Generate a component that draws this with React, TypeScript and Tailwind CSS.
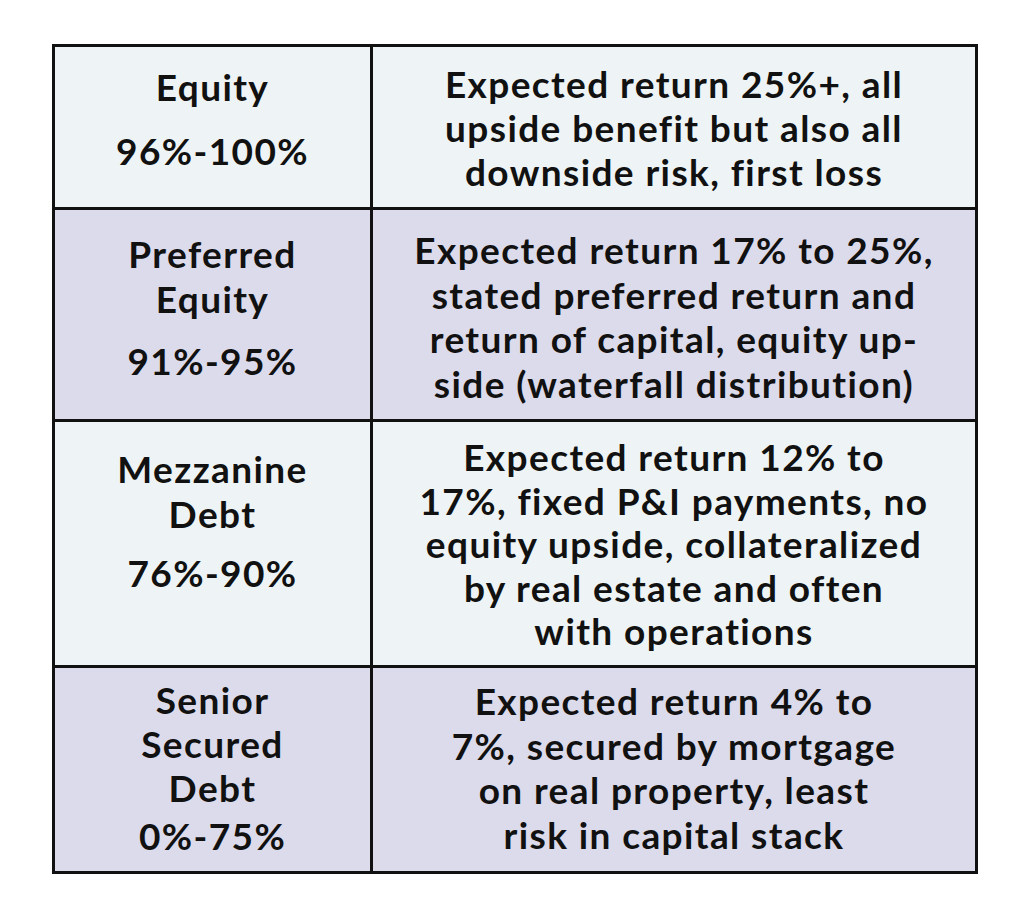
import React from "react";

type Row = {
  name: string[];
  range: string;
  desc: string[];
  bg: string;
  h: string;
  left: string;
  rangeMt: string;
  right: string;
};

const rows: Row[] = [
  {
    name: ["Equity"],
    range: "96%-100%",
    desc: ["Expected return 25%+, all", "upside benefit but also all", "downside risk, first loss"],
    bg: "bg-[#eef4f5]",
    h: "h-[160px]",
    left: "pt-[17px] leading-[45px]",
    rangeMt: "mt-[19px]",
    right: "pt-[15px] leading-[44px]",
  },
  {
    name: ["Preferred", "Equity"],
    range: "91%-95%",
    desc: [
      "Expected return 17% to 25%,",
      "stated preferred return and",
      "return of capital, equity up-",
      "side (waterfall distribution)",
    ],
    bg: "bg-[#dcdbec]",
    h: "h-[212px]",
    left: "pt-[21px] leading-[45px]",
    rangeMt: "mt-[17px]",
    right: "pt-[18px] leading-[44.5px]",
  },
  {
    name: ["Mezzanine", "Debt"],
    range: "76%-90%",
    desc: [
      "Expected return 12% to",
      "17%, fixed P&I payments, no",
      "equity upside, collateralized",
      "by real estate and often",
      "with operations",
    ],
    bg: "bg-[#eef4f5]",
    h: "h-[246px]",
    left: "pt-[24px] leading-[45px]",
    rangeMt: "mt-[14px]",
    right: "pt-[13px] leading-[43.6px]",
  },
  {
    name: ["Senior", "Secured", "Debt"],
    range: "0%-75%",
    desc: [
      "Expected return 4% to",
      "7%, secured by mortgage",
      "on real property, least",
      "risk in capital stack",
    ],
    bg: "bg-[#dcdbec]",
    h: "h-[206px]",
    left: "pt-[10px] leading-[44px]",
    rangeMt: "mt-[4px]",
    right: "pt-[11px] leading-[44.5px]",
  },
];

function Lines({ items }: { items: string[] }) {
  return (
    <p>
      {items.map((t, j) => (
        <React.Fragment key={j}>
          {j > 0 && <br />}
          {t}
        </React.Fragment>
      ))}
    </p>
  );
}

export default function App() {
  return (
    <div className="min-h-[919px] w-[1024px] bg-white pl-[52px] pt-[44px] font-['Lato','Liberation_Sans',sans-serif] font-bold tracking-[1.4px] text-[#111]">
      <div className="w-[926px] border-[3px] border-[#111]">
        {rows.map((r, i) => (
          <div
            key={i}
            className={`flex ${r.h} ${r.bg} ${i > 0 ? "border-t-[3px] border-[#111]" : ""}`}
          >
            <div
              className={`w-[318px] shrink-0 border-r-[3px] border-[#111] text-center text-[37px] ${r.left}`}
            >
              <Lines items={r.name} />
              <p className={r.rangeMt}>{r.range}</p>
            </div>
            <div className={`flex-1 text-center text-[37px] ${r.right}`}>
              <Lines items={r.desc} />
            </div>
          </div>
        ))}
      </div>
    </div>
  );
}
